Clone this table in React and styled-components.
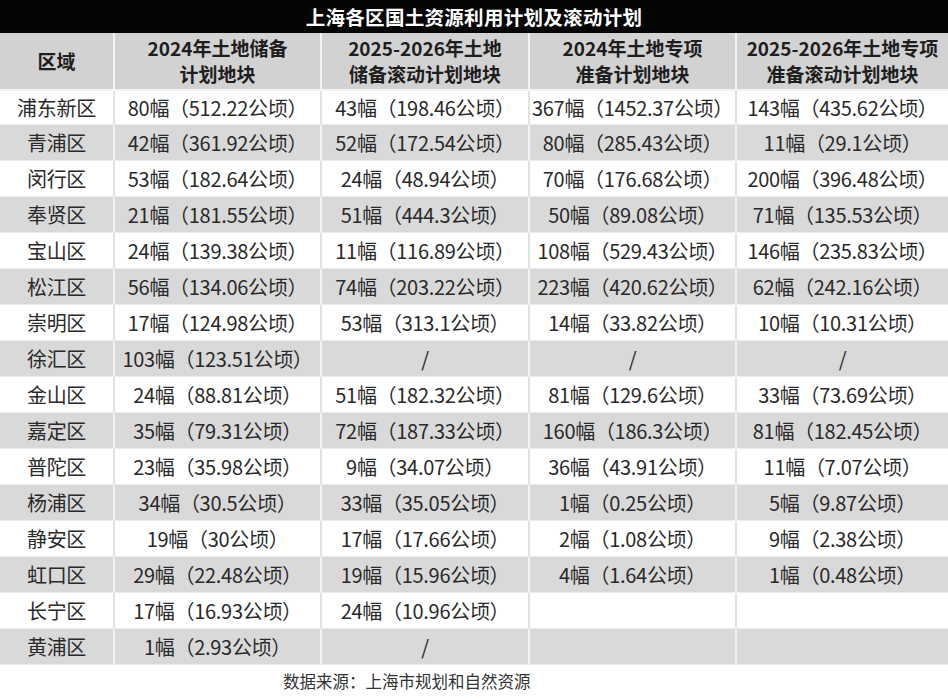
import React from 'react'
import styled, { createGlobalStyle } from 'styled-components'

const Global = createGlobalStyle`
  html, body {
    margin: 0;
    padding: 0;
    background: #ffffff;
  }
  * { box-sizing: border-box; }
`

const Page = styled.div`
  width: 948px;
  height: 699px;
  overflow: hidden;
  font-family: "Noto Sans CJK SC", "Noto Sans", sans-serif;
  color: #222;
`

const TitleBar = styled.div`
  height: 33px;
  background: #050505;
  color: #fff;
  font-weight: 700;
  font-size: 19.5px;
  display: flex;
  align-items: center;
  justify-content: center;
  letter-spacing: 0.3px;
`

const Grid = styled.div`
  display: grid;
  grid-template-columns: 115px 207px 208px 207px 211px;
`

const HeadCell = styled.div`
  height: 58px;
  background: #d2d2d2;
  display: flex;
  align-items: center;
  justify-content: center;
  text-align: center;
  font-weight: 700;
  font-size: 19px;
  line-height: 26px;
  color: #1e1e1e;
  border-right: 2px solid #f4f4f4;
  border-bottom: 2px solid #f4f4f4;
  &:nth-child(5n) { border-right: none; }
`

const Cell = styled.div`
  height: ${p => (p.$first ? 34 : 36)}px;
  background: ${p => (p.$shade ? '#d9d9d9' : '#ffffff')};
  display: flex;
  align-items: center;
  justify-content: center;
  font-size: 20px;
  color: #2a2a2a;
  white-space: nowrap;
  letter-spacing: -0.3px;
  border-right: 2px solid ${p => (p.$shade ? '#f2f2f2' : '#e2e2e2')};
  border-bottom: 1px solid #ececec;
  &:nth-child(5n) { border-right: none; }
`

const Footer = styled.div`
  height: 32px;
  display: flex;
  align-items: center;
  padding-left: 283px;
  font-size: 16.5px;
  color: #333;
`

const heads = [
  ['区域'],
  ['2024年土地储备', '计划地块'],
  ['2025-2026年土地', '储备滚动计划地块'],
  ['2024年土地专项', '准备计划地块'],
  ['2025-2026年土地专项', '准备滚动计划地块'],
]

const rows = [
  ['浦东新区', '80幅（512.22公顷）', '43幅（198.46公顷）', '367幅（1452.37公顷）', '143幅（435.62公顷）'],
  ['青浦区', '42幅（361.92公顷）', '52幅（172.54公顷）', '80幅（285.43公顷）', '11幅（29.1公顷）'],
  ['闵行区', '53幅（182.64公顷）', '24幅（48.94公顷）', '70幅（176.68公顷）', '200幅（396.48公顷）'],
  ['奉贤区', '21幅（181.55公顷）', '51幅（444.3公顷）', '50幅（89.08公顷）', '71幅（135.53公顷）'],
  ['宝山区', '24幅（139.38公顷）', '11幅（116.89公顷）', '108幅（529.43公顷）', '146幅（235.83公顷）'],
  ['松江区', '56幅（134.06公顷）', '74幅（203.22公顷）', '223幅（420.62公顷）', '62幅（242.16公顷）'],
  ['崇明区', '17幅（124.98公顷）', '53幅（313.1公顷）', '14幅（33.82公顷）', '10幅（10.31公顷）'],
  ['徐汇区', '103幅（123.51公顷）', '/', '/', '/'],
  ['金山区', '24幅（88.81公顷）', '51幅（182.32公顷）', '81幅（129.6公顷）', '33幅（73.69公顷）'],
  ['嘉定区', '35幅（79.31公顷）', '72幅（187.33公顷）', '160幅（186.3公顷）', '81幅（182.45公顷）'],
  ['普陀区', '23幅（35.98公顷）', '9幅（34.07公顷）', '36幅（43.91公顷）', '11幅（7.07公顷）'],
  ['杨浦区', '34幅（30.5公顷）', '33幅（35.05公顷）', '1幅（0.25公顷）', '5幅（9.87公顷）'],
  ['静安区', '19幅（30公顷）', '17幅（17.66公顷）', '2幅（1.08公顷）', '9幅（2.38公顷）'],
  ['虹口区', '29幅（22.48公顷）', '19幅（15.96公顷）', '4幅（1.64公顷）', '1幅（0.48公顷）'],
  ['长宁区', '17幅（16.93公顷）', '24幅（10.96公顷）', '', ''],
  ['黄浦区', '1幅（2.93公顷）', '/', '', ''],
]

export default function App() {
  return (
    <Page>
      <Global />
      <TitleBar>上海各区国土资源利用计划及滚动计划</TitleBar>
      <Grid>
        {heads.map((h, i) => (
          <HeadCell key={i}>
            <div>
              {h.map((line, j) => (
                <div key={j}>{line}</div>
              ))}
            </div>
          </HeadCell>
        ))}
        {rows.map((r, ri) =>
          r.map((c, ci) => (
            <Cell key={ri + '-' + ci} $shade={ri % 2 === 1} $first={ri === 0}>
              {c}
            </Cell>
          ))
        )}
      </Grid>
      <Footer>数据来源：上海市规划和自然资源</Footer>
    </Page>
  )
}
